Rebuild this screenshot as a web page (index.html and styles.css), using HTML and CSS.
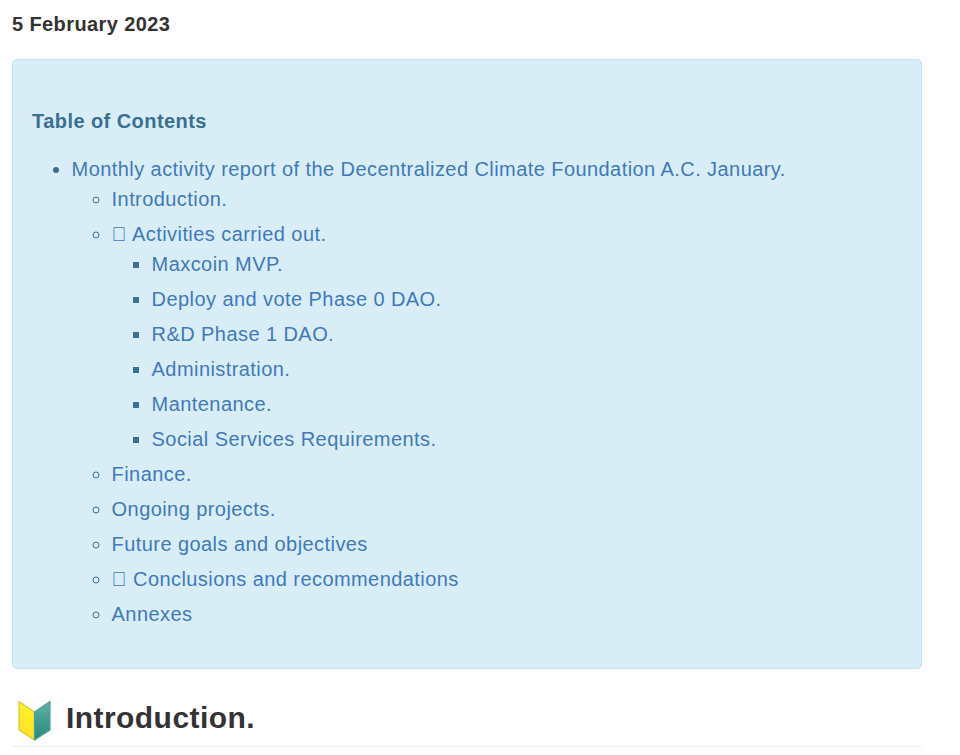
FILE: index.html
```html
<!DOCTYPE html>
<html lang="en">
<head>
<meta charset="utf-8">
<title>Monthly activity report</title>
<link rel="stylesheet" href="styles.css">
</head>
<body>
<main class="page">
  <p class="date">5 February 2023</p>
  <nav class="toc">
    <p class="toc-title">Table of Contents</p>
    <ul class="l1">
      <li><a href="#">Monthly activity report of the Decentralized Climate Foundation A.C. January.</a>
        <ul class="l2">
          <li><a href="#">Introduction.</a></li>
          <li><a href="#"><span class="tight">&#xE000;</span> Activities carried out.</a>
            <ul class="l3">
              <li><a href="#">Maxcoin MVP.</a></li>
              <li><a href="#">Deploy and vote Phase 0 DAO.</a></li>
              <li><a href="#">R&amp;D Phase 1 DAO.</a></li>
              <li><a href="#">Administration.</a></li>
              <li><a href="#">Mantenance.</a></li>
              <li><a href="#">Social Services Requirements.</a></li>
            </ul>
          </li>
          <li><a href="#">Finance.</a></li>
          <li><a href="#">Ongoing projects.</a></li>
          <li><a href="#">Future goals and objectives</a></li>
          <li><a href="#">&#xE000; Conclusions and recommendations</a></li>
          <li><a href="#">Annexes</a></li>
        </ul>
      </li>
    </ul>
  </nav>
  <h2 class="section-title">
    <svg class="leaf" width="33" height="41" viewBox="0 0 33 41" aria-hidden="true">
      <defs>
        <linearGradient id="yel" x1="0" y1="0" x2="0" y2="1"><stop offset="0" stop-color="#fff42c"/><stop offset="1" stop-color="#ffe028"/></linearGradient>
        <linearGradient id="grn" x1="0" y1="0" x2="0" y2="1"><stop offset="0" stop-color="#60b0a4"/><stop offset="1" stop-color="#26897b"/></linearGradient>
      </defs>
      <path d="M1 1.5 L16.5 12 V40 L1 30 Z" fill="url(#yel)" stroke="#d8c63c" stroke-width="1.2" stroke-linejoin="round"/>
      <path d="M32 1.5 L16.5 12 V40 L32 30 Z" fill="url(#grn)" stroke="#4f9f94" stroke-width="1.2" stroke-linejoin="round"/>
    </svg>
    <span class="section-text">Introduction.</span>
  </h2>
</main>
</body>
</html>
```
FILE: styles.css
```css
html, body { margin: 0; padding: 0; background: #fff; }
body {
  font-family: "Liberation Sans", Arial, sans-serif;
  color: #333;
  overflow: hidden;
  height: 755px;
}
.page { width: 910px; padding-left: 12px; }
.date {
  margin: 0;
  padding-top: 11px;
  font-size: 20px;
  line-height: 26px;
  font-weight: 700;
  letter-spacing: .4px;
}
.toc {
  margin-top: 22px;
  height: 610px;
  box-sizing: border-box;
  padding: 37px 19px 0;
  background: #d9edf7;
  border: 1px solid #bce8f1;
  border-radius: 5px;
  color: #3a6f92;
}
.toc-title {
  margin: 0 0 9px;
  font-size: 20px;
  line-height: 48px;
  font-weight: 700;
  letter-spacing: .44px;
  height: 48px;
}
.toc ul { margin: 0; padding-left: 40px; }
.toc .l1 { padding-left: 39.6px; }
.l1 { list-style: disc; }
.l2 { list-style: circle; }
.l3 { list-style: square; }
.toc li {
  font-size: 20px;
  line-height: 30px;
  margin-bottom: 5px;
  letter-spacing: .43px;
}
.toc a { color: #3f79ba; text-decoration: none; }
.tight { margin-right: -1px; }
.section-title {
  display: flex;
  align-items: center;
  gap: 15px;
  margin: 25px 0 0;
  height: 52px;
  padding-left: 6px;
  padding-bottom: 0;
  border-bottom: 1px solid #eee;
  font-size: 30px;
  line-height: 46px;
  font-weight: 700;
  letter-spacing: .44px;
}
.section-text { margin-top: -5px; }
.leaf { flex: none; }
```
